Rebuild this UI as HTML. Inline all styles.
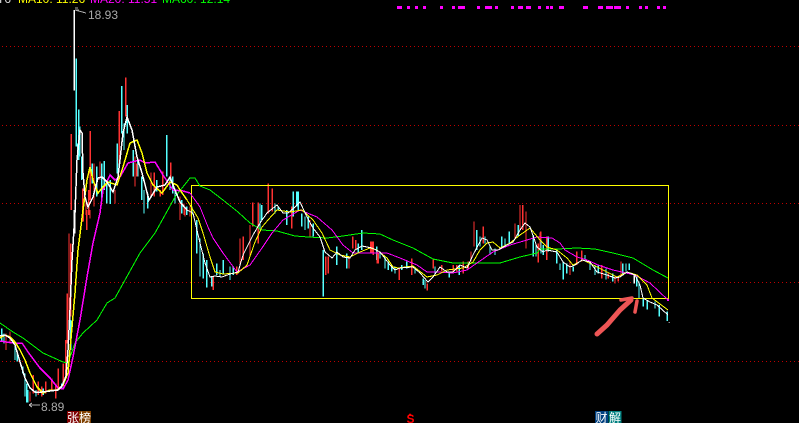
<!DOCTYPE html>
<html><head><meta charset="utf-8"><style>
html,body{margin:0;padding:0;background:#000;width:799px;height:423px;overflow:hidden}
svg{position:absolute;left:0;top:0}
text{font-family:"Liberation Sans","Noto Sans CJK SC",sans-serif}
.z path{vector-effect:non-scaling-stroke;stroke-width:1.3}
</style></head><body>
<svg width="799" height="423" viewBox="0 0 799 423" shape-rendering="crispEdges">
<rect width="799" height="423" fill="#000"/>
<g stroke="#c00000" stroke-dasharray="1 3" stroke-width="1">
<path d="M2 46.5H799"/><path d="M2 125.5H799"/><path d="M2 203.5H799"/><path d="M2 282.5H799"/><path d="M2 361.5H799"/>
</g>
<g font-size="12">
<text x="-3" y="3" fill="#ddd">T6</text>
<text x="18" y="3" fill="#ff0">MA10: 11.26</text>
<text x="90" y="3" fill="#f0f">MA20: 11.51</text>
<text x="162" y="3" fill="#0f0">MA60: 12.14</text>
</g>
<g transform="translate(380,0) scale(.33333)" fill="#f0f">
<path d="M51 18h15v9h-15zM81 18h9v9h-9zM105 18h9v9h-9zM129 18h9v9h-9zM180 18h9v9h-9zM216 18h9v9h-9zM234 18h21v9h-21zM291 18h9v9h-9zM315 18h21v9h-21zM345 18h9v9h-9zM393 18h9v9h-9zM414 18h15v9h-15zM438 18h15v9h-15zM474 18h9v9h-9zM498 18h9v9h-9zM510 18h9v9h-9zM537 18h15v9h-15zM609 18h15v9h-15zM654 18h15v9h-15zM678 18h21v9h-21zM702 18h21v9h-21zM738 18h9v9h-9zM777 18h9v9h-9zM795 18h9v9h-9zM831 18h9v9h-9zM849 18h9v9h-9z"/>
</g>
<!-- candles, zoom-1 coordinates -->
<g class="z" transform="scale(.33333)" fill="none">
<path stroke="#54ffff" d="M229 175V440M236 328V480M240 380V470M233 430V470M245 470V540M277 490V550M290 500V590M305 490V600M313 483V570M320 540V610M331 540V612M352 430V520M365 258V400M382 315V400M372 370V450M400 450V530M413 480V530M425 530V600M432 570V640M443 580V625M500 405V530M510 530V570M470 540V575M518 530V580M525 575V610M545 600V640M560 620V645M575 620V645"/>
<path stroke="#ff3232" d="M214 402V630M248 565V640M258 600V645M266 570V645M271 393V600M282 490V620M300 485V540M358 333V490M377 232V350M345 570V610M405 470V560M410 490V530M453 517V590M463 517V590M488 515V585M481 570V590M512 487V540M540 590V640M552 610V645"/>
<path stroke="#fff" d="M223 30V272M224 640V700"/>
</g>
<!-- zoom-2 -->
<g class="z" transform="translate(0,210) scale(.33333)" fill="none">
<path stroke="#54ffff" d="M5 355V395M12 370V400M45 400V450M52 425V455M68 470V490M75 490V560M80 520V578M83 540V578M108 540V560M130 535V555M185 520V535M212 330V420"/>
<path stroke="#ff3232" d="M18 370V420M30 365V400M100 495V550M90 545V575M115 515V555M125 530V560M137 515V550M155 505V540M167 520V565M175 475V535M190 460V530M197 390V500M202 250V400M207 70V370M212 100V320M260 0V60M270 0V25M250 0V35"/>
<path stroke="#fff" d="M222 0V60"/>
</g>
<!-- zoom-3 -->
<g class="z" transform="translate(180,170) scale(.33333)" fill="none">
<path stroke="#54ffff" d="M50 150V250M60 205V320M70 250V325M80 270V352M95 320V350M110 280V315M120 300V320M130 270V310M150 290V330M160 290V315M240 100V180M245 105V150M285 100V130M295 110V120M320 120V165M340 65V140M350 65V110M355 65V120M365 130V170M375 140V180M385 140V175M400 160V200M430 240V380M470 230V285M500 250V295M545 180V240M535 220V250M590 230V270"/>
<path stroke="#ff3232" d="M0 100V150M15 110V140M30 110V140M100 320V360M170 290V315M180 205V290M190 200V270M210 165V260M218 97V170M235 97V220M265 40V130M277 55V125M335 110V175M390 150V200M437 260V315M445 260V310M507 260V295M518 200V235M527 210V240M572 215V250M580 215V255M595 250V280"/>
</g>
<!-- zoom-4 -->
<g class="z" transform="translate(370,190) scale(.33333)" fill="none">
<path stroke="#54ffff" d="M30 190V205M45 200V235M55 215V240M65 225V245M75 230V250M95 225V240M110 215V235M135 235V250M160 265V285M165 270V295M195 230V250M238 245V262M268 225V255M320 120V180M330 140V170M345 140V160M360 170V195M375 175V195M395 140V175M405 145V170M418 125V160M445 105V140M490 135V200M498 165V200M520 165V195M535 140V175"/>
<path stroke="#ff3232" d="M5 155V190M22 185V220M88 235V270M125 205V255M172 280V302M190 205V235M215 225V245M250 225V245M260 225V245M280 215V250M295 215V235M303 185V215M312 95V170M340 110V160M435 100V145M450 45V120M458 45V120M468 65V175M505 160V217M512 125V165M530 165V210"/>
</g>
<!-- zoom-5 -->
<g class="z" transform="translate(540,220) scale(.33333)" fill="none">
<path stroke="#ff3232" d="M0 37V90M20 50V120M50 95V125M90 125V165M110 95V135M125 92V125M185 135V175M205 160V175M225 170V190M243 125V170M235 170V185"/>
<path stroke="#54ffff" d="M3 60V100M25 55V95M50 90V130M60 130V150M70 125V178M80 130V160M100 140V155M135 105V125M150 125V150M165 135V165M175 135V160M198 145V178M218 160V185M248 130V165M258 130V155M268 130V150M290 170V200M297 185V235M310 235V260M322 240V268M345 245V265M358 255V290M382 275V303"/>
<path stroke="#fff" d="M283 165V190M388 306V308"/>
</g>
<rect x="191.5" y="185.5" width="477" height="113" fill="none" stroke="#ff0" stroke-width="1"/>
<g fill="none">
<polyline stroke="#0f0" stroke-width="1" points="0,323 13,332 23,338 43,353 63,362 68,363 75,343 83,333 97,320 107,303 115,298 125,280 140,253 155,233 165,215 175,197 190,178 195,178 200,186 210,190 223,200 238,212 250,223 262,230 277,231 295,236 308,237 327,238 343,236 363,233 380,234 393,240 413,248 433,259 453,263 473,263 500,263 520,257 537,253 540,249 557,249 577,248 595,249 613,253 633,258 653,270 668,278"/>
<!-- left section: heavier strokes -->
<polyline stroke="#f0f" stroke-width="1.5" points="0,341 13,343 22,343 28,352 40,368 50,378 58,388 63,389 68,380 73,357 80,320 87,277 93,243 100,213 103,190 110,175 115,180 120,177 128,163 140,160 145,163 155,162 163,175 173,190 183,191 190,193"/>
<polyline stroke="#ff0" stroke-width="1.5" points="0,338 5,335 10,337 15,342 20,350 25,360 30,373 37,387 43,393 50,390 57,390 63,385 68,373 72,327 75,293 78,250 83,210 87,180 90,167 93,180 98,193 103,187 108,182 117,185 123,167 130,143 137,140 142,153 147,173 153,185 162,193 170,182 177,185 180,190 187,200"/>
<polyline stroke="#fff" stroke-width="1.5" points="0,336 5,335 10,338 15,345 20,362 25,378 30,388 35,392 42,392 50,391 58,390 62,386 66,376 68,350 70,310 72,260 75,213 77,160 80,130 82,133 83,173 85,197 88,207 93,197 98,178 102,177 107,182 113,192 118,177 123,133 127,117 132,130 137,157 142,173 149,200 157,187 165,185 170,177 175,190 180,202 187,210"/>
<!-- right section: thin strokes -->
<polyline stroke="#f0f" stroke-width="1" points="190,193 195,200 200,207 208,227 213,238 223,253 237,272 250,265 262,248 272,233 283,220 300,210 317,217 332,230 343,245 353,253 370,253 387,253 400,258 417,265 427,272 437,272 453,273 467,270 477,263 493,252 510,245 527,240 537,237 552,238 560,243 565,250 577,257 587,260 598,265 613,270 635,275 650,283 668,300"/>
<polyline stroke="#ff0" stroke-width="1" points="187,200 198,218 203,233 210,257 215,272 223,274 238,273 247,265 255,242 262,227 268,220 277,210 290,212 302,210 313,220 322,233 330,250 340,255 350,257 360,252 370,248 377,250 387,258 393,267 398,268 413,266 427,277 437,275 447,270 463,268 473,262 480,250 487,243 493,242 500,248 510,243 520,235 530,228 540,240 547,247 557,250 567,258 573,265 583,260 597,267 607,272 617,277 627,272 637,275 647,285 652,298 668,310"/>
<polyline stroke="#fff" stroke-width="1" points="187,210 193,213 200,243 205,263 210,277 215,276 222,277 230,274 238,272 243,255 253,235 260,223 267,213 277,205 283,213 288,213 295,207 300,202 307,217 313,228 320,237 325,252 332,258 337,252 343,257 350,258 355,250 362,246 372,248 380,252 390,265 395,270 400,268 413,267 420,273 428,282 433,277 440,267 447,272 453,272 460,265 467,268 473,255 482,238 487,240 492,250 498,250 507,245 513,242 520,230 525,223 530,227 537,247 543,252 547,250 557,252 563,262 570,267 575,265 582,260 590,262 597,272 607,275 615,278 620,277 627,272 635,275 640,285 643,298 650,302 657,305 668,315"/>
</g>
<rect x="667" y="299" width="2" height="2" fill="#f0f"/>
<!-- hand-drawn arrow -->
<g shape-rendering="auto" fill="none" stroke="#ee5555" stroke-linecap="round" stroke-linejoin="round">
<path stroke-width="5" d="M597 334L607 325L620 310L631 300"/>
<path stroke-width="3.5" d="M621 300L632 298"/>
<path stroke-width="3.5" d="M637 301L635 312"/>
</g>
<!-- price labels -->
<g fill="none" stroke="#aaa" stroke-width="1">
<path d="M75 10L86 13M75 8H78M76 10H79"/>
<path d="M29 405H40M29 405L32 403M29 405L32 407"/>
</g>
<text x="88" y="19" font-size="12" fill="#aaa">18.93</text>
<text x="41" y="411" font-size="12" fill="#aaa">8.89</text>
<!-- bottom tags -->
<rect x="67" y="411" width="12" height="12" fill="#800000"/>
<rect x="79" y="411" width="12" height="12" fill="#804000"/>
<rect x="595" y="411" width="13" height="12" fill="#004080"/>
<rect x="608.5" y="411" width="13" height="12" fill="#008080"/>
<g font-size="12" fill="#fff">
<text x="67" y="422">张</text>
<text x="79" y="422">榜</text>
<text x="595.5" y="422">财</text>
<text x="609" y="422">解</text>
</g>
<text x="406.5" y="423" font-size="12" font-weight="bold" fill="#f00">S</text>
<path d="M410 413L407.5 416H412.5Z" fill="#f00"/>
</svg>
</body></html>
